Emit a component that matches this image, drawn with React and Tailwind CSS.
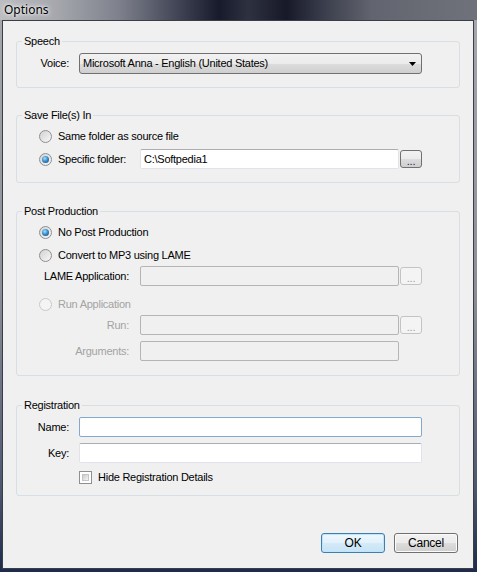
import React from 'react';

const font = "font-['Liberation_Sans',Arial,sans-serif] text-[11px] tracking-[-0.25px]";

const GroupBox = ({ title, className = '', children }) => (
    <div className={`border border-[#d5dfe5] rounded-[3px] ${className}`}>
        <div className="-mt-[8px] ml-[5px] w-fit bg-[#f0f0f0] px-[2px] leading-[14px] text-black">{title}</div>
        {children}
    </div>
);

const Radio = ({ checked, disabled }) => (
    <div
        className={`w-[13px] h-[13px] shrink-0 rounded-full border flex items-center justify-center ${
            disabled
                ? 'border-[#c9c9c9] bg-[#f4f4f4]'
                : 'border-[#8e8f8f] bg-[linear-gradient(135deg,#d2d2d2,#f8f8f8)]'
        }`}
    >
        {checked && (
            <div className="w-[7px] h-[7px] rounded-full bg-[radial-gradient(circle_at_40%_35%,#a9e2fb_0%,#3a8fcf_45%,#0f3f6b_100%)]"></div>
        )}
    </div>
);

const TextBox = ({ value, width, disabled, focus }) => (
    <div
        className={`h-[20px] flex items-center pl-[3px] rounded-[2px] border ${width} ${
            disabled
                ? 'bg-[#f0f0f0] border-[#b5b5b5]'
                : focus
                ? 'bg-white border-[#85a9cc]'
                : 'bg-white border-[#e2e3ea] border-t-[#abadb3]'
        }`}
    >
        {value}
    </div>
);

const DotsButton = ({ disabled }) => (
    <div
        className={`ml-[1px] w-[22px] h-[18px] rounded-[3px] border flex items-end justify-center pb-[1px] leading-[10px] ${
            disabled
                ? 'border-[#c2c4c6] bg-[#f4f4f4] text-[#a0a0a0]'
                : 'border-[#707070] bg-[linear-gradient(#f2f2f2_0%,#ebebeb_50%,#dddddd_51%,#cfcfcf_100%)] text-[#1a1a55]'
        }`}
    >
        ...
    </div>
);

const Button = ({ label, primary }) => (
    <div
        className={`w-[64px] h-[20px] rounded-[3px] border flex items-center justify-center text-[12px] ${
            primary
                ? 'border-[#3c7fb1] bg-[linear-gradient(#eef7fd_0%,#e3f1fb_50%,#d4eaf8_51%,#c7e3f6_100%)] shadow-[inset_0_0_0_1px_#bfe5f9]'
                : 'border-[#707070] bg-[linear-gradient(#f2f2f2_0%,#ebebeb_50%,#dddddd_51%,#cfcfcf_100%)] shadow-[inset_0_0_0_1px_#fbfbfb]'
        }`}
    >
        {label}
    </div>
);

export default function App() {
    return (
        <div className="w-[477px] h-[572px] flex flex-col bg-[linear-gradient(#a6a8ae_0%,#8c8f98_50%,#4d5870_85%,#1d2b4c_100%)] overflow-hidden">
            {/* Glass title bar */}
            <div className="h-[20px] shrink-0 pl-[4px] flex items-center bg-[linear-gradient(90deg,#bcbdc1_0%,#a5a7ad_12%,#7e818c_25%,#3e4152_38%,#171a2a_46%,#2e3140_52%,#171929_60%,#3b3e4c_68%,#62656f_78%,#70727b_100%)]">
                <span className="font-['Noto_Sans',sans-serif] text-[12px] text-black [text-shadow:0_0_6px_#ffffff,0_0_3px_#ffffff]">Options</span>
            </div>

            <div className="flex-1 flex pl-[2px] pr-[3px] pb-[3px]">
                <div className={`flex-1 flex flex-col border border-[#3b3e45] bg-[#f0f0f0] px-[13px] text-black ${font}`}>
                    {/* Speech */}
                    <GroupBox title="Speech" className="mt-[20px] pb-[13px]">
                        <div className="mt-[5px] flex items-center">
                            <div className="w-[52px] text-right">Voice:</div>
                            <div className="ml-[10px] w-[343px] h-[21px] rounded-[3px] border border-[#707070] bg-[linear-gradient(#f2f2f2_0%,#ebebeb_50%,#dddddd_51%,#cfcfcf_100%)] flex items-center pl-[3px] pr-[5px]">
                                <span className="flex-1">Microsoft Anna - English (United States)</span>
                                <svg width="7" height="4" viewBox="0 0 7 4">
                                    <path d="M0 0h7L3.5 4z" fill="#000" />
                                </svg>
                            </div>
                        </div>
                    </GroupBox>

                    {/* Save File(s) In */}
                    <GroupBox title="Save File(s) In" className="mt-[27px] pb-[13px]">
                        <div className="mt-[4px] h-[20px] flex items-center pl-[22px]">
                            <Radio />
                            <span className="ml-[6px]">Same folder as source file</span>
                        </div>
                        <div className="mt-[3px] h-[20px] flex items-center pl-[22px]">
                            <Radio checked />
                            <span className="ml-[6px] w-[82px]">Specific folder:</span>
                            <TextBox value="C:\Softpedia1" width="w-[259px]" />
                            <DotsButton />
                        </div>
                    </GroupBox>

                    {/* Post Production */}
                    <GroupBox title="Post Production" className="mt-[28px] pb-[14px]">
                        <div className="mt-[4px] h-[20px] flex items-center pl-[22px]">
                            <Radio checked />
                            <span className="ml-[6px]">No Post Production</span>
                        </div>
                        <div className="mt-[3px] h-[20px] flex items-center pl-[22px]">
                            <Radio />
                            <span className="ml-[6px]">Convert to MP3 using LAME</span>
                        </div>
                        <div className="mt-[1px] h-[20px] flex items-center">
                            <span className="w-[112px] text-right">LAME Application:</span>
                            <div className="ml-[11px] flex items-center">
                                <TextBox width="w-[259px]" disabled />
                                <DotsButton disabled />
                            </div>
                        </div>
                        <div className="mt-[8px] h-[20px] flex items-center pl-[22px] text-[#a3a3a3]">
                            <Radio disabled />
                            <span className="ml-[6px]">Run Application</span>
                        </div>
                        <div className="mt-[1px] h-[20px] flex items-center text-[#a3a3a3]">
                            <span className="w-[112px] text-right">Run:</span>
                            <div className="ml-[11px] flex items-center">
                                <TextBox width="w-[259px]" disabled />
                                <DotsButton disabled />
                            </div>
                        </div>
                        <div className="mt-[6px] h-[20px] flex items-center text-[#a3a3a3]">
                            <span className="w-[112px] text-right">Arguments:</span>
                            <div className="ml-[11px]">
                                <TextBox width="w-[259px]" disabled />
                            </div>
                        </div>
                    </GroupBox>

                    {/* Registration */}
                    <GroupBox title="Registration" className="mt-[29px] pb-[10px]">
                        <div className="mt-[5px] h-[20px] flex items-center">
                            <span className="w-[52px] text-right">Name:</span>
                            <div className="ml-[10px]">
                                <TextBox width="w-[343px]" focus />
                            </div>
                        </div>
                        <div className="mt-[6px] h-[20px] flex items-center">
                            <span className="w-[52px] text-right">Key:</span>
                            <div className="ml-[10px]">
                                <TextBox width="w-[343px]" />
                            </div>
                        </div>
                        <div className="mt-[7px] h-[15px] flex items-center pl-[62px]">
                            <div className="w-[13px] h-[13px] border border-[#8e8f8f] bg-white p-[2px]">
                                <div className="w-full h-full bg-[linear-gradient(135deg,#cbcbcb,#f4f4f4)] border border-[#c4c4c4]"></div>
                            </div>
                            <span className="ml-[6px]">Hide Registration Details</span>
                        </div>
                    </GroupBox>

                    {/* Dialog buttons */}
                    <div className="mt-[37px] -mr-[13px] pr-[15px] flex justify-end gap-[9px]">
                        <Button label="OK" primary />
                        <Button label="Cancel" />
                    </div>
                </div>
            </div>
        </div>
    );
}
